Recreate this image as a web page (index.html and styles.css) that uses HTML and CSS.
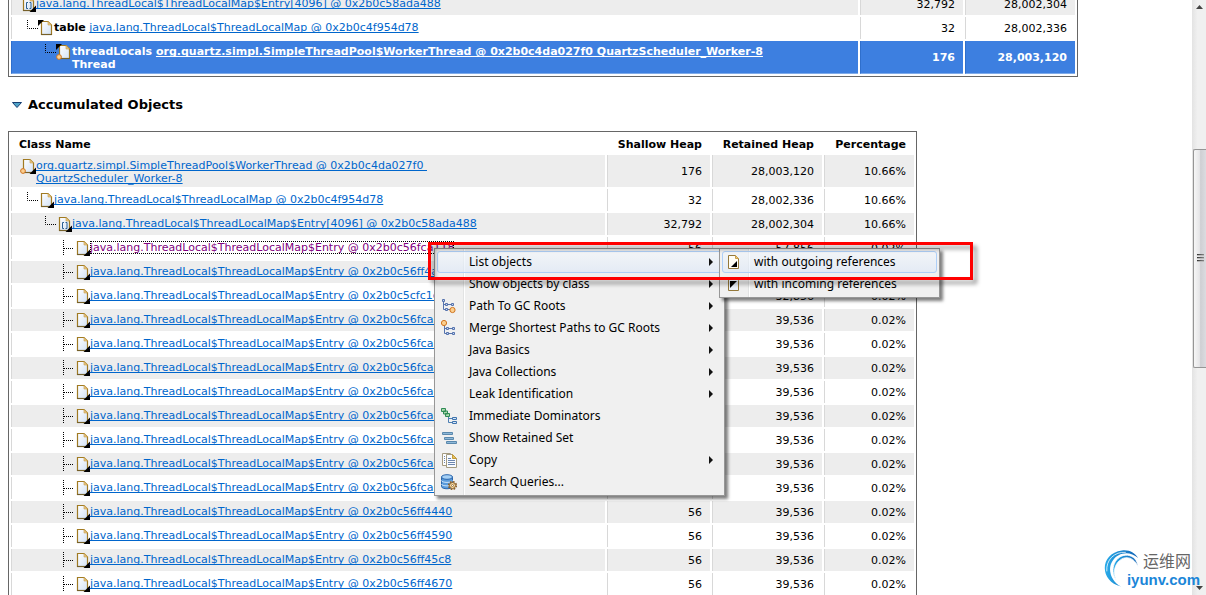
FILE: index.html
```html
<!DOCTYPE html>
<html lang="en">
<head>
    <meta charset="UTF-8">
    <meta name="viewport" content="width=device-width, initial-scale=1.0">
    <title>Accumulated Objects</title>
    <link rel="stylesheet" href="styles.css">
</head>
<body>
    <!-- Shared icons -->
    <svg class="sprite" width="0" height="0">
        <defs>
            <linearGradient id="paper" x1="0" y1="0" x2="1" y2="1">
                <stop offset="0" stop-color="#ffffff"/>
                <stop offset="1" stop-color="#d3e2f5"/>
            </linearGradient>
            <linearGradient id="swoosh" x1="0" y1="0" x2="1" y2="0">
                <stop offset="0" stop-color="#29abe9"/>
                <stop offset="1" stop-color="#1263b5"/>
            </linearGradient>
            <symbol id="file" viewBox="0 0 17 17">
                <path d="M3.5 1.5H10L13.5 5V14.5H3.5Z" fill="url(#paper)" stroke="#a07a22" stroke-width="1.2"/>
                <path d="M3 14.5H14" stroke="#75602a" stroke-width="1.2"/>
                <path d="M10 1.5V5H13.5Z" fill="#e8c887" stroke="#c9a04a" stroke-width=".6"/>
            </symbol>
            <symbol id="out" viewBox="0 0 17 17">
                <use href="#file"/>
                <path d="M16 9.5V16H9.5Z" fill="#000"/>
            </symbol>
            <symbol id="array" viewBox="0 0 17 17">
                <use href="#out"/>
                <path d="M8 6.5H6.5V12.5H8M9.5 6.5H11V12.5H9.5" fill="none" stroke="#2b6093"/>
            </symbol>
            <symbol id="root" viewBox="0 0 17 17">
                <use href="#out"/>
                <circle cx="3" cy="13" r="2.4" fill="#fbcf8f" stroke="#d07420"/>
            </symbol>
            <symbol id="in" viewBox="0 0 17 17">
                <use href="#file"/>
                <path d="M0 0H6L0 6Z" fill="#000"/>
            </symbol>
            <symbol id="in-root" viewBox="0 0 17 17">
                <use href="#in"/>
                <circle cx="3" cy="13" r="2.4" fill="#fbcf8f" stroke="#d07420"/>
            </symbol>
            <symbol id="elbow" viewBox="0 0 18 16">
                <path d="M7.5 0V8.5H18" fill="none" stroke="#000" stroke-dasharray="1 1"/>
            </symbol>
            <symbol id="tee" viewBox="0 0 18 16">
                <path d="M7.5 0V16M8 8.5H18" fill="none" stroke="#000" stroke-dasharray="1 1"/>
            </symbol>
        </defs>
    </svg>

    <div class="page">
        <main class="report">
            <!-- Shortest paths -->
            <table class="objects paths">
                <tbody>
                    <tr class="odd">
                        <td><div class="node"><svg class="icon"><use href="#array"/></svg><span class="label"><a href="#">java.lang.ThreadLocal$ThreadLocalMap$Entry[4096] @ 0x2b0c58ada488</a></span></div></td>
                        <td class="num">32,792</td>
                        <td class="num">28,002,304</td>
                    </tr>
                    <tr>
                        <td><div class="node"><svg class="line"><use href="#elbow"/></svg><svg class="icon"><use href="#in"/></svg><span class="label"><b>table</b> <a href="#">java.lang.ThreadLocal$ThreadLocalMap @ 0x2b0c4f954d78</a></span></div></td>
                        <td class="num">32</td>
                        <td class="num">28,002,336</td>
                    </tr>
                    <tr class="selected">
                        <td><div class="node"><svg class="line"></svg><svg class="line"><use href="#elbow"/></svg><svg class="icon"><use href="#in-root"/></svg><span class="label">threadLocals <a href="#">org.quartz.simpl.SimpleThreadPool$WorkerThread @ 0x2b0c4da027f0 QuartzScheduler_Worker-8</a><br>Thread</span></div></td>
                        <td class="num">176</td>
                        <td class="num">28,003,120</td>
                    </tr>
                </tbody>
            </table>

            <h2><svg class="twistie" viewBox="0 0 10 6"><path d="M.5 .5H9.5L5 5.5Z" fill="#4fa3c7" stroke="#173f73"/></svg>Accumulated Objects</h2>

            <!-- Accumulated objects -->
            <table class="objects accumulated">
                <thead>
                    <tr>
                        <th class="name">Class Name</th>
                        <th class="shallow">Shallow Heap</th>
                        <th class="retained">Retained Heap</th>
                        <th class="percent">Percentage</th>
                    </tr>
                </thead>
                <tbody id="objectRows">
                    <tr class="odd">
                        <td><div class="node"><svg class="icon"><use href="#root"/></svg><span class="label"><a href="#">org.quartz.simpl.SimpleThreadPool$WorkerThread @ 0x2b0c4da027f0&nbsp;<br>QuartzScheduler_Worker-8</a></span></div></td>
                        <td class="num">176</td>
                        <td class="num">28,003,120</td>
                        <td class="num">10.66%</td>
                    </tr>
                    <tr>
                        <td><div class="node"><svg class="line"><use href="#elbow"/></svg><svg class="icon"><use href="#out"/></svg><span class="label"><a href="#">java.lang.ThreadLocal$ThreadLocalMap @ 0x2b0c4f954d78</a></span></div></td>
                        <td class="num">32</td>
                        <td class="num">28,002,336</td>
                        <td class="num">10.66%</td>
                    </tr>
                    <tr class="odd">
                        <td><div class="node"><svg class="line"></svg><svg class="line"><use href="#elbow"/></svg><svg class="icon"><use href="#array"/></svg><span class="label"><a href="#">java.lang.ThreadLocal$ThreadLocalMap$Entry[4096] @ 0x2b0c58ada488</a></span></div></td>
                        <td class="num">32,792</td>
                        <td class="num">28,002,304</td>
                        <td class="num">10.66%</td>
                    </tr>
                </tbody>
            </table>
        </main>

        <!-- Scrollbar -->
        <div class="scrollbar">
            <svg class="arrow" viewBox="0 0 7 4"><path d="M0 4L3.5 0L7 4Z" fill="#444"/></svg>
            <div class="track">
                <div class="thumb"><i></i><i></i><i></i></div>
            </div>
            <svg class="arrow" viewBox="0 0 7 4"><path d="M0 0H7L3.5 4Z" fill="#444"/></svg>
        </div>
    </div>

    <!-- Context menu -->
    <div class="menu context">
        <button class="item active"><span class="pic"></span>List objects<i class="more"></i></button>
        <button class="item"><span class="pic"></span>Show objects by class<i class="more"></i></button>
        <button class="item"><span class="pic"><svg viewBox="0 0 16 16"><path d="M2.5 2V11.5H5M2.5 6.5H5M7 6.5H11M7 11.5H10" fill="none" stroke="#5573ad"/><path d="M1.5 1.5h2v2h-2zM4.5 5.5h2v2h-2zM10.5 5.5h2v2h-2zM4.5 10.5h2v2h-2z" fill="#c9d8f2" stroke="#5573ad"/><circle cx="11.5" cy="12" r="2.6" fill="#fbcf8f" stroke="#d07420"/></svg></span>Path To GC Roots<i class="more"></i></button>
        <button class="item"><span class="pic"><svg viewBox="0 0 16 16"><path d="M3.5 5V13.5H6M3.5 8.5H6M8 8.5H12M8 13.5H12" fill="none" stroke="#5573ad"/><path d="M5.5 7.5h2v2h-2zM11.5 7.5h2v2h-2zM5.5 12.5h2v2h-2zM11.5 12.5h2v2h-2z" fill="#c9d8f2" stroke="#5573ad"/><circle cx="3" cy="3" r="2.6" fill="#fbcf8f" stroke="#d07420"/></svg></span>Merge Shortest Paths to GC Roots<i class="more"></i></button>
        <button class="item"><span class="pic"></span>Java Basics<i class="more"></i></button>
        <button class="item"><span class="pic"></span>Java Collections<i class="more"></i></button>
        <button class="item"><span class="pic"></span>Leak Identification<i class="more"></i></button>
        <button class="item"><span class="pic"><svg viewBox="0 0 16 16"><path d="M4.5 5.5h4v3h-4zM2.5 3h4v3h-4zM.5 .5h4v3h-4z" fill="#a9d8ab" stroke="#2f8a55"/><path d="M7.5 9V14.5H11M7.5 10.5H11" fill="none" stroke="#4d7fb3"/><path d="M11.5 9.5h4v2h-4zM11.5 13.5h4v2h-4z" fill="#d5e6f7" stroke="#3f73ad"/></svg></span>Immediate Dominators</button>
        <button class="item"><span class="pic"><svg viewBox="0 0 16 16"><path d="M1.5 2.5h10v2h-10zM3.5 7.5h9v2h-9zM5.5 11.5h10v2h-10z" fill="#8db8d8" stroke="#5a88ad"/></svg></span>Show Retained Set</button>
        <button class="item"><span class="pic"><svg viewBox="0 0 16 16"><path d="M1.5 1.5h8v12h-8z" fill="#fdfdfd" stroke="#a39a80"/><path d="M5.5 2.5h6l4 4v9h-10z" fill="#f8fbff" stroke="#a39a80"/><path d="M11.5 2.5v4h4z" fill="#e8c25f" stroke="#c29b3c"/><path d="M3 4.5h1M3 6.5h1M3 8.5h1M3 10.5h1M7 6.5h3M7 8.5h7M7 10.5h7M7 12.5h7" stroke="#6c86ae"/></svg></span>Copy<i class="more"></i></button>
        <button class="item"><span class="pic"><svg viewBox="0 0 16 16"><path d="M.5 3V12.5C.5 15.5 11.5 15.5 11.5 12.5V3Z" fill="#5a9bdc" stroke="#2a66ad"/><path d="M.5 6.5C.5 9 11.5 9 11.5 6.5M.5 10C.5 12.5 11.5 12.5 11.5 10" fill="none" stroke="#cfe5fa"/><ellipse cx="6" cy="3" rx="5.5" ry="2.3" fill="#a5d0f5" stroke="#2a66ad"/><circle cx="11.5" cy="11.5" r="3.8" fill="none" stroke="#8a5f28" stroke-width="1.6" stroke-dasharray="1.7 1.28"/><circle cx="11.5" cy="11.5" r="3" fill="#f5d9a4" stroke="#8a5f28"/><circle cx="11.5" cy="11.5" r="1" fill="#fff" stroke="#8a5f28" stroke-width=".8"/></svg></span>Search Queries...</button>
    </div>

    <div class="menu submenu">
        <button class="item active"><span class="pic"><svg viewBox="0 0 16 16"><path d="M2.5 1.5H9.5L12.5 4.5V14.5H2.5Z" fill="#fffdf5" stroke="#94783a"/><path d="M9.5 1.5V4.5H12.5Z" fill="#e8c887" stroke="#c9a04a"/><path d="M11 7V13H5Z" fill="#000"/></svg></span>with outgoing references</button>
        <button class="item"><span class="pic"><svg viewBox="0 0 16 16"><path d="M2.5 1.5H9.5L12.5 4.5V14.5H2.5Z" fill="#eaf1fa" stroke="#94783a"/><path d="M4 5H11L4 12Z" fill="#000"/></svg></span>with incoming references</button>
    </div>

    <div class="highlight"></div>

    <!-- Watermark -->
    <div class="watermark">
        <svg viewBox="0 0 40 42"><path d="M19 40C-4 35-4 5 20 2C28 1 34 5 37 10C28 2 16 4 10 13C4 22 9 35 19 40Z" fill="url(#swoosh)"/><path d="M14 33C6 22 13 6 26 7C32 8 36 12 37 19C32 8 22 7 16 14C11 20 11 27 14 33Z" fill="url(#swoosh)" stroke="#fff" stroke-width=".8"/><path d="M4 24C3 12 12 3 24 4" fill="none" stroke="#fff" stroke-width=".8"/></svg>
        <div class="words">
            <span class="cn">运维网</span>
            <span class="site">iyunv.com</span>
        </div>
    </div>

    <script>
        // Address, retained heap
        const entries = [
            ["0x2b0c56fca118", "57,856"],
            ["0x2b0c56ff4a20", "39,536"],
            ["0x2b0c5cfc1e38", "32,856"],
            ["0x2b0c56fca268", "39,536"],
            ["0x2b0c56fca3b8", "39,536"],
            ["0x2b0c56fca508", "39,536"],
            ["0x2b0c56fca658", "39,536"],
            ["0x2b0c56fca7a8", "39,536"],
            ["0x2b0c56fca8f8", "39,536"],
            ["0x2b0c56fcaa48", "39,536"],
            ["0x2b0c56fcab98", "39,536"],
            ["0x2b0c56ff4440", "39,536"],
            ["0x2b0c56ff4590", "39,536"],
            ["0x2b0c56ff45c8", "39,536"],
            ["0x2b0c56ff4670", "39,536"]
        ];

        // Function to add the map entries below the array
        function displayEntries() {
            const objectRows = document.getElementById("objectRows");

            entries.forEach(([address, retained], i) => {
                const row = document.createElement("tr");
                if (i % 2 === 1) {
                    row.classList.add("odd");
                }

                row.innerHTML = `
                    <td><div class="node"><svg class="line"></svg><svg class="line"></svg><svg class="line"><use href="#tee"/></svg><svg class="icon"><use href="#out"/></svg><span class="label ${i === 0 ? "current" : ""}"><a href="#">java.lang.ThreadLocal$ThreadLocalMap$Entry @ ${address}</a></span></div></td>
                    <td class="num">56</td>
                    <td class="num">${retained}</td>
                    <td class="num">0.02%</td>
                `;

                objectRows.appendChild(row);
            });
        }

        displayEntries();
    </script>
</body>
</html>
```
FILE: styles.css
```css
/* Basic Reset */
* {
    margin: 0;
    padding: 0;
    box-sizing: border-box;
}

body {
    font-family: "DejaVu Sans", Verdana, sans-serif;
    font-size: 11px;
    line-height: 13px;
    color: #000;
    background-color: #fff;
    overflow: hidden;
}

.sprite {
    position: absolute;
}

.page {
    display: flex;
    height: 100vh;
}

.report {
    flex: 1;
    min-width: 0;
    padding-left: 8px;
    overflow: hidden;
}

/* Object tables */
.objects {
    border: 1px solid #666;
    border-collapse: separate;
    border-spacing: 2px;
    table-layout: fixed;
}

.paths {
    width: 1070px;
    margin-top: -10px;
}

.accumulated {
    width: 909px;
}

.objects td {
    height: 22px;
    padding: 3px 8px;
    border-left: 1px solid #d8d8d8;
    vertical-align: middle;
}

.objects th {
    height: 19px;
    padding: 3px 8px 1px;
    text-align: right;
}

.objects .name {
    text-align: left;
}

.paths td:nth-child(2),
.objects .shallow {
    width: 103px;
}

.paths td:nth-child(3),
.objects .retained {
    width: 110px;
}

.objects .percent {
    width: 90px;
}

.objects .num {
    text-align: right;
}

.odd td {
    background-color: #ededed;
}

.selected td {
    color: #fff;
    font-weight: bold;
    background-color: #3d7fe0;
    border-left-color: #2f6fcc;
    border-bottom: 1px solid #7fabea;
}

.node {
    display: flex;
    align-items: flex-start;
    white-space: nowrap;
}

.label {
    margin: 1px 0 -1px;
}

.node a {
    color: #0066cc;
    text-decoration: underline;
    text-decoration-skip-ink: none;
}

.current {
    outline: 1px dotted #000;
    outline-offset: -1px;
}

.current a {
    color: #800080;
    text-decoration: none;
}

.selected .node a {
    color: #fff;
}

.icon {
    flex: none;
    width: 17px;
    height: 17px;
    margin-right: -1px;
    margin-bottom: -1px;
}

.line {
    flex: none;
    width: 18px;
    height: 16px;
}

h2 {
    display: flex;
    align-items: center;
    gap: 6px;
    padding: 20px 4px 18px;
    font-size: 13px;
    line-height: 16px;
}

.twistie {
    width: 10px;
    height: 6px;
}

/* Scrollbar */
.scrollbar {
    display: flex;
    flex-direction: column;
    align-items: center;
    justify-content: space-between;
    width: 14px;
    padding: 5px 0;
    background: linear-gradient(to right, #e3e3e3, #f0f0f0 40%);
}

.arrow {
    width: 7px;
    height: 4px;
}

.track {
    flex: 1;
    width: 100%;
    padding: 140px 0 0 1px;
}

.thumb {
    display: flex;
    flex-direction: column;
    align-items: center;
    justify-content: center;
    gap: 1px;
    height: 50%;
    border: 1px solid #959595;
    border-right: none;
    border-radius: 2px 0 0 2px;
    background: linear-gradient(to right, #f6f6f6, #e6e6e8 45%, #cfcfd3 55%, #dcdce0);
}

.thumb i {
    width: 7px;
    height: 2px;
    background: linear-gradient(to right, #333, #888);
    border-bottom: 1px solid #bbb;
}

/* Menus */
.menu {
    position: absolute;
    padding: 2px;
    border: 1px solid #979797;
    background: linear-gradient(to right, #f0f0f0 28px, #e2e3e3 28px, #e2e3e3 29px, #fff 29px, #fff 30px, #f0f0f0 30px);
    box-shadow: 3px 3px 3px rgba(0, 0, 0, 0.5);
}

.context {
    left: 434px;
    top: 248px;
    width: 291px;
}

.submenu {
    left: 719px;
    top: 248px;
    width: 221px;
}

.item {
    display: flex;
    align-items: center;
    width: 100%;
    height: 22px;
    padding: 0 8px 0 3px;
    border: 1px solid transparent;
    border-radius: 3px;
    background: none;
    font-family: "Noto Sans", sans-serif;
    font-size: 12px;
    line-height: 16px;
    color: #000;
    white-space: nowrap;
}

.item.active {
    border-color: #aecff7;
    background: linear-gradient(rgba(243, 247, 252, 0.6), rgba(220, 232, 248, 0.6));
}

.pic {
    width: 16px;
    height: 16px;
    margin-right: 12px;
}

.pic svg {
    display: block;
    width: 16px;
    height: 16px;
}

.more {
    margin-left: auto;
    border: 4px solid transparent;
    border-left-color: #111;
    border-right-width: 0;
}

/* Red frame around the chosen command */
.highlight {
    position: absolute;
    left: 428px;
    top: 242px;
    width: 545px;
    height: 38px;
    border: 3px solid #f00;
    filter: drop-shadow(4px 4px 2px rgba(0, 0, 0, 0.4));
}

.watermark {
    position: absolute;
    right: 6px;
    bottom: 6px;
    display: flex;
    align-items: flex-start;
}

.watermark svg {
    width: 38px;
    height: 41px;
}

.words {
    display: flex;
    flex-direction: column;
    margin-left: -14px;
    padding-top: 5px;
}

.cn {
    padding-left: 16px;
    font-family: "Liberation Sans", "Noto Sans CJK SC", sans-serif;
    font-size: 16px;
    line-height: 18px;
    color: #666;
}

.site {
    font-family: "Liberation Sans", Arial, sans-serif;
    font-size: 15px;
    font-weight: bold;
    line-height: 18px;
    color: #1b86d8;
}
```
